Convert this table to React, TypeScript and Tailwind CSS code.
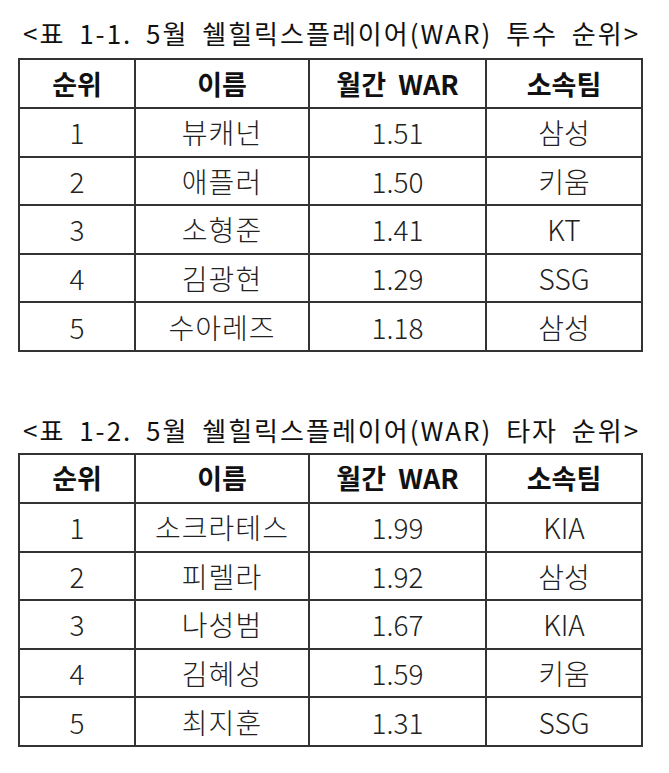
const pitchers = [
  { rank: 1, name: "뷰캐넌", war: "1.51", team: "삼성" },
  { rank: 2, name: "애플러", war: "1.50", team: "키움" },
  { rank: 3, name: "소형준", war: "1.41", team: "KT" },
  { rank: 4, name: "김광현", war: "1.29", team: "SSG" },
  { rank: 5, name: "수아레즈", war: "1.18", team: "삼성" },
];

const hitters = [
  { rank: 1, name: "소크라테스", war: "1.99", team: "KIA" },
  { rank: 2, name: "피렐라", war: "1.92", team: "삼성" },
  { rank: 3, name: "나성범", war: "1.67", team: "KIA" },
  { rank: 4, name: "김혜성", war: "1.59", team: "키움" },
  { rank: 5, name: "최지훈", war: "1.31", team: "SSG" },
];

type Row = { rank: number; name: string; war: string; team: string };

function RankTable({ rows }: { rows: Row[] }) {
  return (
    <table className="w-[623px] table-fixed border-collapse border-2 border-[#333] text-center">
      <colgroup>
        <col className="w-[116px]" />
        <col className="w-[174px]" />
        <col className="w-[177px]" />
        <col className="w-[156px]" />
      </colgroup>
      <thead>
        <tr className="h-[49px] text-[27px] leading-[30px] font-bold text-[#111]">
          <th className="border-2 border-[#333] p-0">순위</th>
          <th className="border-2 border-[#333] p-0">이름</th>
          <th className="border-2 border-[#333] p-0">월간&nbsp; WAR</th>
          <th className="border-2 border-[#333] p-0">소속팀</th>
        </tr>
      </thead>
      <tbody>
        {rows.map((r) => (
          <tr key={r.rank} className="h-[48.6px] text-[28px] leading-[30px] font-light text-[#222]">
            <td className="border-2 border-[#333] p-0">{r.rank}</td>
            <td className="border-2 border-[#333] p-0 tracking-[1px]">{r.name}</td>
            <td className="border-2 border-[#333] p-0">{r.war}</td>
            <td className="border-2 border-[#333] p-0">{r.team}</td>
          </tr>
        ))}
      </tbody>
    </table>
  );
}

export default function App() {
  return (
    <div
      className="w-[669px] h-[773px] bg-white pl-[18px]"
      style={{ fontFamily: '"Noto Sans CJK KR", "Noto Sans", sans-serif' }}
    >
      <div className="pt-[20px] pl-[5px] leading-[26px] text-[26px] tracking-[2px] [word-spacing:6px] text-[#111] mb-[12px] whitespace-pre">
        {"<표 1-1. 5월 쉘힐릭스플레이어(WAR) 투수 순위>"}
      </div>
      <RankTable rows={pitchers} />
      <div className="pt-[65px] pl-[5px] leading-[26px] text-[26px] tracking-[2px] [word-spacing:6px] text-[#111] mb-[10px] whitespace-pre">
        {"<표 1-2. 5월 쉘힐릭스플레이어(WAR) 타자 순위>"}
      </div>
      <RankTable rows={hitters} />
    </div>
  );
}
